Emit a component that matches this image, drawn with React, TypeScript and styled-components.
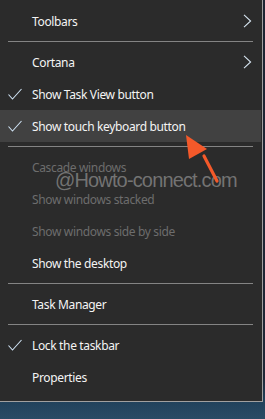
import React from "react";
import styled, { createGlobalStyle } from "styled-components";

type Item =
  | { kind: "item"; label: string; checked?: boolean; disabled?: boolean; submenu?: boolean; hover?: boolean }
  | { kind: "sep" };

const items: Item[] = [
  { kind: "item", label: "Toolbars", submenu: true },
  { kind: "sep" },
  { kind: "item", label: "Cortana", submenu: true },
  { kind: "item", label: "Show Task View button", checked: true },
  { kind: "item", label: "Show touch keyboard button", checked: true, hover: true },
  { kind: "sep" },
  { kind: "item", label: "Cascade windows", disabled: true },
  { kind: "item", label: "Show windows stacked", disabled: true },
  { kind: "item", label: "Show windows side by side", disabled: true },
  { kind: "item", label: "Show the desktop" },
  { kind: "sep" },
  { kind: "item", label: "Task Manager" },
  { kind: "sep" },
  { kind: "item", label: "Lock the taskbar", checked: true },
  { kind: "item", label: "Properties" },
];

export default function App() {
  return (
    <>
      <GlobalStyle />
      <Desktop>
        <Menu>
          {items.map((it, i) =>
            it.kind === "sep" ? (
              <Separator key={i} />
            ) : (
              <MenuItem key={i} $hover={it.hover} $disabled={it.disabled}>
                <CheckSlot>
                  {it.checked && (
                    <svg width="16" height="13" viewBox="0 0 16 13">
                      <path d="M1.5 6.5 L5.5 11 L14.5 1" fill="none" stroke="#cfe2f3" strokeWidth="1.1" />
                    </svg>
                  )}
                </CheckSlot>
                <Label>{it.label}</Label>
                {it.submenu && (
                  <Chevron width="9" height="14" viewBox="0 0 9 14">
                    <path d="M1 0.8 L7.6 7 L1 13.2" fill="none" stroke="#d6e4f0" strokeWidth="1.1" />
                  </Chevron>
                )}
              </MenuItem>
            )
          )}
          <Watermark>@Howto-connect.com</Watermark>
          <Arrow width="40" height="52" viewBox="0 0 40 52">
            <path d="M32 47 L19 22" stroke="#f4592a" strokeWidth="3.2" strokeLinecap="round" />
            <polygon points="1,1 4,25 22,15" fill="#f4592a" />
          </Arrow>
        </Menu>
      </Desktop>
    </>
  );
}

const GlobalStyle = createGlobalStyle`
  body {
    margin: 0;
    background: #1d2533;
  }
`;

const Desktop = styled.div`
  width: 265px;
  height: 419px;
  overflow: hidden;
  background: linear-gradient(180deg, #1d2432 0%, #1f2736 90%, #21425c 96%, #2a4b65 100%);
`;

const Menu = styled.div`
  position: relative;
  box-sizing: border-box;
  width: 263px;
  height: 402px;
  padding: 5px 0 8px;
  background: #2b2b2b;
  border-right: 1px solid #a0a0a0;
  border-bottom: 1px solid #a0a0a0;
  font-family: "Noto Sans", "Open Sans", sans-serif;
  font-size: 12px;
`;

const MenuItem = styled.div<{ $hover?: boolean; $disabled?: boolean }>`
  display: flex;
  align-items: center;
  height: 32px;
  margin-right: 1px;
  background: ${(p) => (p.$hover ? "#414141" : "transparent")};
  color: ${(p) => (p.$disabled ? "#6d6d6d" : "#f4f4f4")};
`;

const CheckSlot = styled.div`
  width: 32px;
  display: flex;
  align-items: center;
  padding-left: 7px;
  box-sizing: border-box;
`;

const Label = styled.span`
  flex: 1;
  letter-spacing: -0.35px;
`;

const Chevron = styled.svg`
  margin-right: 9px;
`;

const Separator = styled.div`
  height: 1px;
  margin: 4px 9px 4px 8px;
  background: #848484;
`;

const Watermark = styled.div`
  position: absolute;
  left: 55px;
  top: 169px;
  font-family: "Liberation Sans", Arial, sans-serif;
  font-size: 20px;
  letter-spacing: -0.85px;
  color: rgba(140, 140, 140, 0.75);
  pointer-events: none;
`;

const Arrow = styled.svg`
  position: absolute;
  left: 185px;
  top: 134px;
`;
